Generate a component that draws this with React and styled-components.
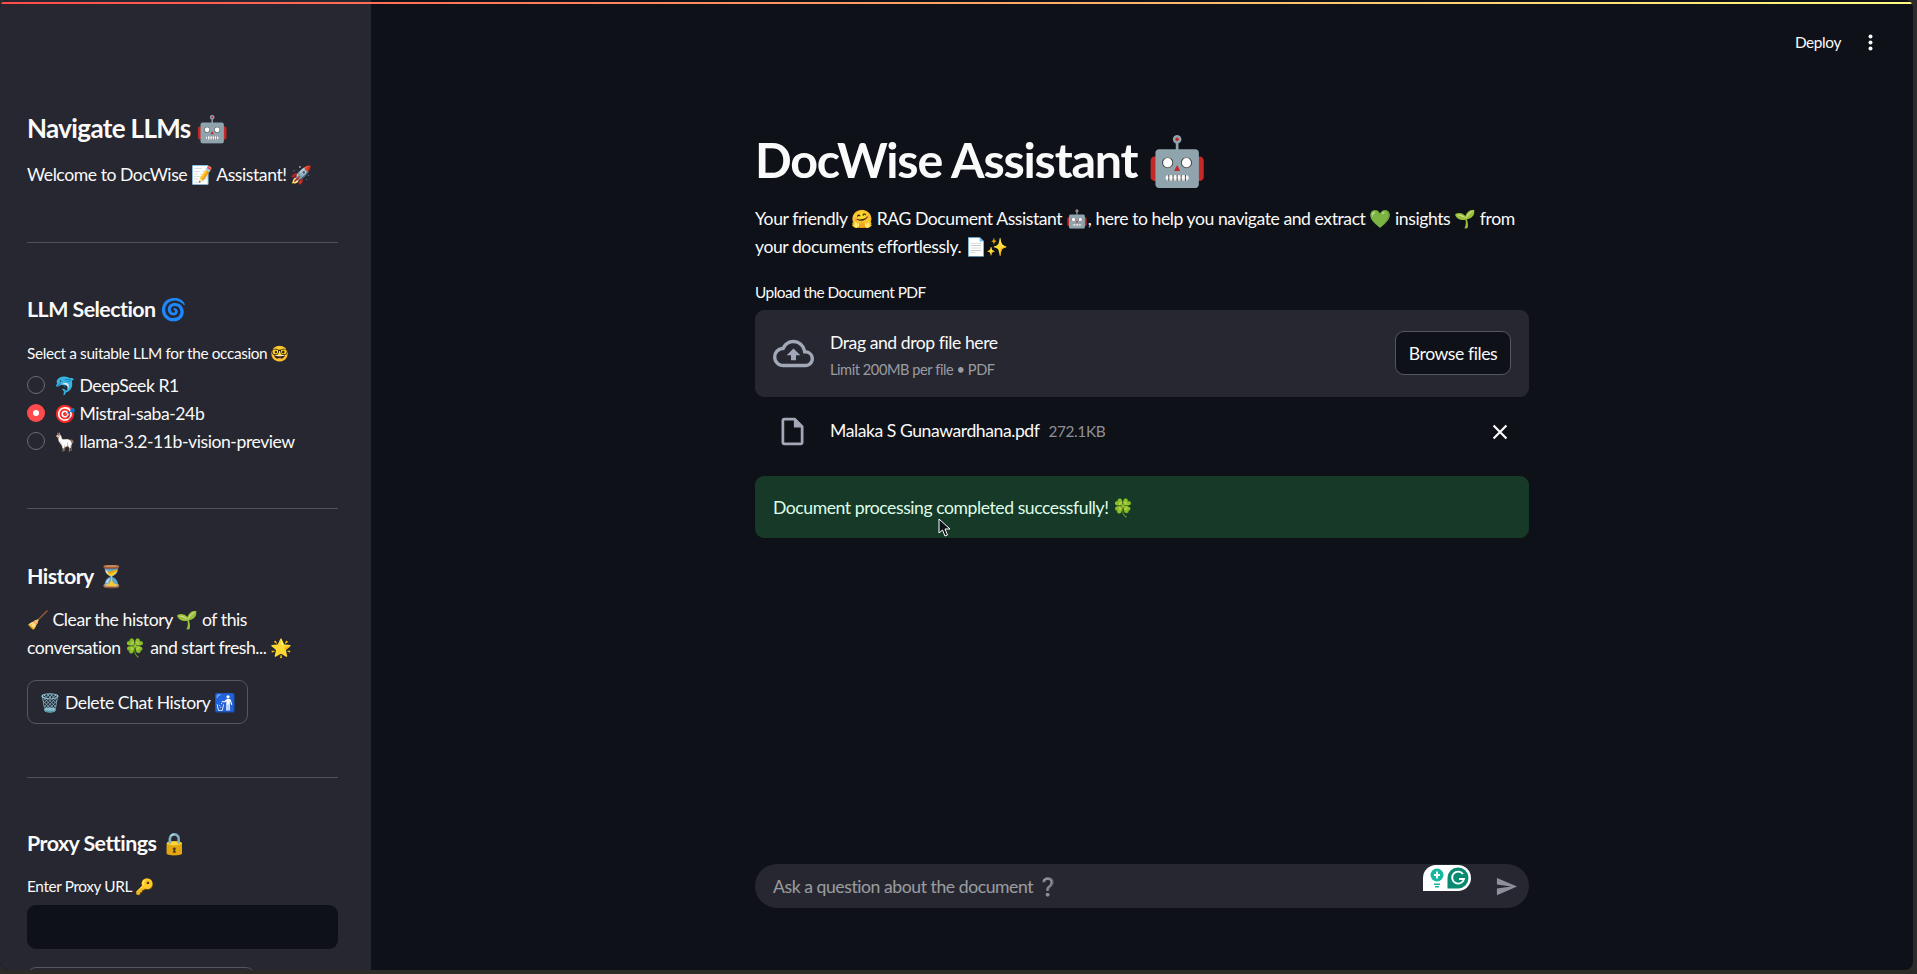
import React from "react";
import styled, { createGlobalStyle } from "styled-components";

const FONT = `Lato, "Noto Color Emoji", sans-serif`;

const GlobalStyle = createGlobalStyle`
  html, body {
    margin: 0;
    height: 100%;
    background: #2b2b29;
    overflow: hidden;
  }
  #root { height: 100%; }
  * {
    box-sizing: border-box;
    letter-spacing: -0.025em;
  }
`;

const Window = styled.div`
  position: relative;
  width: 1913px;
  height: 970px;
  display: flex;
  background: #0e1117;
  color: #fafafa;
  font-family: ${FONT};
  font-size: 17.6px;
  overflow: hidden;
  border-radius: 8px;
`;

const Decoration = styled.div`
  position: absolute;
  top: 2px;
  left: 0;
  right: 0;
  height: 2px;
  background: linear-gradient(90deg, #ff4b4b, #fffd80);
`;

const Sidebar = styled.aside`
  width: 371px;
  flex: none;
  background: #262730;
  padding: 111px 33px 0 27px;
  overflow: hidden;
`;

const SideHeading = styled.h3`
  margin: ${(p) => p.$top || 0}px 0 0;
  font-size: ${(p) => (p.$large ? 26 : 21.4)}px;
  font-weight: 700;
  line-height: 34px;
`;

const SideText = styled.p`
  margin: ${(p) => p.$top || 0}px 0 0;
  line-height: 28px;
`;

const Rule = styled.hr`
  margin: ${(p) => p.$top}px 0 0;
  border: none;
  height: 1px;
  background: #50515a;
`;

const SmallLabel = styled.div`
  margin-top: ${(p) => p.$top || 0}px;
  font-size: 15.4px;
  line-height: 20px;
`;

const RadioList = styled.div`
  margin-top: 8px;
  display: flex;
  flex-direction: column;
`;

const RadioRow = styled.label`
  height: 28px;
  display: flex;
  align-items: center;
  gap: 9px;
`;

const RadioDot = styled.span`
  width: 18px;
  height: 18px;
  flex: none;
  border-radius: 50%;
  border: ${(p) => (p.$on ? "none" : "1px solid #6b6c74")};
  background: ${(p) => (p.$on ? "#ff4b4b" : "#262730")};
  display: flex;
  align-items: center;
  justify-content: center;

  &::after {
    content: "";
    display: ${(p) => (p.$on ? "block" : "none")};
    width: 6px;
    height: 6px;
    border-radius: 50%;
    background: #fff;
  }
`;

const OutlineButton = styled.button`
  display: block;
  flex: none;
  margin-top: ${(p) => p.$top || 0}px;
  width: ${(p) => p.$width}px;
  height: 44px;
  padding: 0;
  border: 1px solid #55565f;
  border-radius: 9px;
  background: ${(p) => p.$bg || "transparent"};
  color: #fafafa;
  font: inherit;
`;

const ProxyInput = styled.div`
  margin-top: 9px;
  height: 44px;
  border-radius: 9px;
  background: #0e1117;
`;

const Main = styled.main`
  flex: 1;
  min-width: 0;
  display: flex;
  flex-direction: column;
  align-items: center;
  position: relative;
`;

const Toolbar = styled.div`
  position: absolute;
  top: 30px;
  right: 40px;
  display: flex;
  align-items: center;
  gap: 27px;
  height: 24px;
  font-size: 15.4px;
`;

const Column = styled.div`
  width: 774px;
  flex: 1;
  display: flex;
  flex-direction: column;
  padding: 125px 0 62px;
`;

const Title = styled.h1`
  margin: 0;
  font-size: 48.4px;
  font-weight: 700;
  line-height: 68px;
`;

const Intro = styled.p`
  margin: 12px 0 0;
  line-height: 28px;
`;

const UploadLabel = styled.div`
  margin-top: 21px;
  font-size: 15.4px;
  line-height: 20px;
  letter-spacing: -0.035em;
`;

const DropZone = styled.div`
  margin-top: 8px;
  height: 87px;
  border-radius: 9px;
  background: #262730;
  display: flex;
  align-items: center;
  padding: 0 18px 1px;
`;

const DropText = styled.div`
  flex: 1;
  margin-left: 16px;
  padding-top: 6px;
`;

const DropTitle = styled.div`
  line-height: 27px;
`;

const DropHint = styled.div`
  font-size: 14.6px;
  line-height: 28px;
  letter-spacing: -0.03em;
  color: #9a9ba3;
`;

const FileRow = styled.div`
  height: 79px;
  display: flex;
  align-items: center;
  padding: 0 20px 10px 21px;
`;

const FileName = styled.span`
  margin-left: 21px;
  line-height: 28px;
  margin-bottom: 2px;
`;

const FileSize = styled.span`
  margin-left: 9px;
  margin-bottom: 2px;
  flex: 1;
  font-size: 15.4px;
  color: #8f9097;
`;

const SuccessBox = styled.div`
  height: 62px;
  border-radius: 9px;
  background: #173928;
  color: #dffde9;
  display: flex;
  align-items: center;
  padding: 0 18px;
`;

const ChatBar = styled.div`
  margin-top: auto;
  height: 44px;
  border-radius: 22px;
  background: #262730;
  display: flex;
  align-items: center;
  justify-content: space-between;
  padding: 0 11px 0 18px;
  position: relative;
`;

const Placeholder = styled.span`
  opacity: 0.55;
`;

const GrammarlyBadge = styled.div`
  position: absolute;
  top: 1px;
  left: 668px;
  width: 48px;
  height: 26px;
  background: #fff;
  border-radius: 13px 13px 13px 0;
  display: flex;
  align-items: center;
  gap: 2px;
  padding-left: 6px;
`;

const Pointer = styled.svg`
  position: absolute;
  left: 567px;
  top: 518px;
`;

const IconSvg = styled.svg`
  flex: none;
  display: block;
`;

const UploadCloud = () => (
  <IconSvg width="41" height="41" viewBox="0 0 24 24" fill="#a3a8b8">
    <path d="M19.35 10.04A7.49 7.49 0 0 0 12 4C9.11 4 6.6 5.64 5.35 8.04A5.994 5.994 0 0 0 0 14c0 3.31 2.69 6 6 6h13c2.76 0 5-2.24 5-5 0-2.64-2.05-4.78-4.65-4.96zM19 18H6c-2.21 0-4-1.79-4-4 0-2.05 1.53-3.76 3.56-3.97l1.07-.11.5-.95A5.469 5.469 0 0 1 12 6c2.62 0 4.88 1.86 5.39 4.43l.3 1.5 1.53.11A2.98 2.98 0 0 1 22 15c0 1.65-1.35 3-3 3zM8 13h2.55v3h2.9v-3H16l-4-4z" />
  </IconSvg>
);

const FileIcon = () => (
  <IconSvg width="33" height="33" viewBox="0 0 24 24" fill="#a3a8b8">
    <path d="M14 2H6c-1.1 0-2 .9-2 2v16c0 1.1.9 2 2 2h12c1.1 0 2-.9 2-2V8l-6-6zM6 20V4h7v5h5v11H6z" />
  </IconSvg>
);

const CloseIcon = () => (
  <IconSvg width="18" height="18" viewBox="0 0 14 14" fill="none" stroke="#fafafa" strokeWidth="1.7">
    <path d="M2 2l10 10M12 2L2 12" />
  </IconSvg>
);

const SendIcon = () => (
  <IconSvg width="23" height="23" viewBox="0 0 24 24" fill="#8e8f9a">
    <path d="M2.01 21 23 12 2.01 3 2 10l15 2-15 2z" />
  </IconSvg>
);

const KebabIcon = () => (
  <IconSvg width="5" height="17" viewBox="0 0 5 17" fill="#fafafa">
    <circle cx="2.5" cy="2.5" r="2" />
    <circle cx="2.5" cy="8.5" r="2" />
    <circle cx="2.5" cy="14.5" r="2" />
  </IconSvg>
);

const Grammarly = () => (
  <GrammarlyBadge>
    <svg width="16" height="20" viewBox="0 0 16 20">
      <circle cx="8" cy="7" r="6.5" fill="#15b79e" />
      <path d="M5 15.5h6v1.600H5zM6 18h4v1.400H6z" fill="#15b79e" />
      <path d="M7 3.500h2V6h2v2H9v2.500H7V8H5V6h2z" fill="#fff" />
    </svg>
    <svg width="22" height="22" viewBox="0 0 22 22">
      <path d="M11 .5a10.500 10.500 0 0 1 0 21H.5V11A10.500 10.500 0 0 1 11 .5z" fill="#0b8a72" />
      <path d="M16 7a6 6 0 1 0 1 5h-5" fill="none" stroke="#fff" strokeWidth="1.8" />
    </svg>
  </GrammarlyBadge>
);

const App = () => {
  return (
    <>
      <GlobalStyle />
      <Window>
        <Decoration />
        <Sidebar>
          <SideHeading $large>Navigate LLMs 🤖</SideHeading>
          <SideText $top={16}>Welcome to DocWise 📝 Assistant! 🚀</SideText>
          <Rule $top={53} />
          <SideHeading $top={49}>LLM Selection 🌀</SideHeading>
          <SmallLabel $top={17}>Select a suitable LLM for the occasion 🤓</SmallLabel>
          <RadioList>
            <RadioRow><RadioDot />🐬 DeepSeek R1</RadioRow>
            <RadioRow><RadioDot $on />🎯 Mistral-saba-24b</RadioRow>
            <RadioRow><RadioDot />🦙 llama-3.2-11b-vision-preview</RadioRow>
          </RadioList>
          <Rule $top={53} />
          <SideHeading $top={50}>History ⏳</SideHeading>
          <SideText $top={13}>
            🧹 Clear the history 🌱 of this conversation 🍀 and start fresh... 🌟
          </SideText>
          <OutlineButton $top={18} $width={221}>🗑️ Delete Chat History 🚮</OutlineButton>
          <Rule $top={53} />
          <SideHeading $top={48}>Proxy Settings 🔒</SideHeading>
          <SmallLabel $top={16}>Enter Proxy URL 🔑</SmallLabel>
          <ProxyInput />
          <OutlineButton $top={18} $width={228} />
        </Sidebar>
        <Main>
          <Toolbar>
            <span>Deploy</span>
            <KebabIcon />
          </Toolbar>
          <Column>
            <Title>DocWise Assistant 🤖</Title>
            <Intro>
              Your friendly 🤗 RAG Document Assistant 🤖, here to help you navigate and extract 💚
              insights 🌱 from your documents effortlessly. 📄✨
            </Intro>
            <UploadLabel>Upload the Document PDF</UploadLabel>
            <DropZone>
              <UploadCloud />
              <DropText>
                <DropTitle>Drag and drop file here</DropTitle>
                <DropHint>Limit 200MB per file • PDF</DropHint>
              </DropText>
              <OutlineButton $width={116} $bg="#0e1117">Browse files</OutlineButton>
            </DropZone>
            <FileRow>
              <FileIcon />
              <FileName>Malaka S Gunawardhana.pdf</FileName>
              <FileSize>272.1KB</FileSize>
              <CloseIcon />
            </FileRow>
            <SuccessBox>Document processing completed successfully! 🍀</SuccessBox>
            <ChatBar>
              <Placeholder>Ask a question about the document ❔</Placeholder>
              <Grammarly />
              <SendIcon />
            </ChatBar>
          </Column>
          <Pointer width="13" height="19" viewBox="0 0 13 19">
            <path d="M1 1v14l3.500-3 2.500 6 2.500-1-2.500-6h5z" fill="#0e1117" stroke="#fff" strokeWidth="1" />
          </Pointer>
        </Main>
      </Window>
    </>
  );
};

export default App;
